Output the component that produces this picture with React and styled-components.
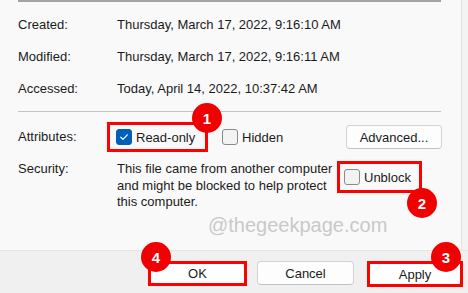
import React from 'react';
import styled, { createGlobalStyle } from 'styled-components';

const GlobalStyle = createGlobalStyle`
  html, body {
    margin: 0;
    padding: 0;
    background: #f0f0f0;
  }
  * {
    box-sizing: border-box;
  }
`;

// Window frame
const Window = styled.div`
  width: 468px;
  height: 293px;
  display: flex;
  flex-direction: column;
  overflow: hidden;
  font-family: "Liberation Sans", Arial, sans-serif;
  font-size: 13px;
  color: #1b1b1b;
`;

const Body = styled.div`
  height: 251px;
  display: flex;
  border-bottom: 1px solid #e5e5e5;
`;

const Main = styled.div`
  width: 462px;
  background: #f9f9f9;
  border-right: 1px solid #e3e3e3;
  padding: 0 19px 0 18px;
  display: flex;
  flex-direction: column;
`;

const Gutter = styled.div`
  flex: 1;
  background: #f3f3f3;
`;

const Rule = styled.div`
  width: 423px;
  height: ${(p) => (p.$strong ? '2px' : '1px')};
  background: ${(p) => (p.$strong ? '#a3a3a3' : '#c4c4c4')};
  margin-top: ${(p) => p.$mt || 0}px;
`;

// Date rows
const DateGrid = styled.div`
  display: grid;
  grid-template-columns: 99px 1fr;
  grid-auto-rows: 32px;
  align-items: center;
  padding-top: 6px;
  white-space: nowrap;
`;

const Row = styled.div`
  display: flex;
  align-items: ${(p) => (p.$top ? 'flex-start' : 'center')};
  margin-top: ${(p) => p.$mt}px;
`;

const Label = styled.div`
  width: ${(p) => p.$w}px;
  flex: none;
  line-height: 16.5px;
`;

const Desc = styled.div`
  width: 220px;
  flex: none;
  line-height: 16.5px;
`;

// Annotation box drawn around a control
const Highlight = styled.div`
  position: relative;
  width: ${(p) => p.$w}px;
  height: ${(p) => p.$h}px;
  flex: none;
  border: 3px solid #ff0000;
  background: ${(p) => (p.$fill ? '#ffffff' : 'transparent')};
  display: flex;
  align-items: center;
  justify-content: ${(p) => (p.$center ? 'center' : 'flex-start')};
  padding-left: ${(p) => p.$pl || 0}px;
`;

const Badge = styled.div`
  position: absolute;
  left: ${(p) => p.$left}px;
  top: ${(p) => p.$top}px;
  width: 30px;
  height: 30px;
  border-radius: 50%;
  background: #f00000;
  color: #ffffff;
  font-weight: bold;
  font-size: 15px;
  display: flex;
  align-items: center;
  justify-content: center;
  z-index: 2;
`;

const Check = styled.label`
  display: flex;
  align-items: center;
  gap: 4px;
  margin-left: ${(p) => p.$ml || 0}px;
  white-space: nowrap;
`;

const Box = styled.span`
  width: 16px;
  height: 16px;
  border-radius: 3px;
  display: flex;
  align-items: center;
  justify-content: center;
  background: ${(p) => (p.$checked ? '#005fb8' : '#f3f3f3')};
  border: 1px solid ${(p) => (p.$checked ? '#005fb8' : '#8a8a8a')};
`;

const Button = styled.div`
  width: ${(p) => p.$w}px;
  height: 24px;
  flex: none;
  margin-left: ${(p) => (p.$auto ? 'auto' : `${p.$ml || 0}px`)};
  border: 1px solid #d3d3d3;
  border-bottom-color: #c2c2c2;
  border-radius: 4px;
  background: #fdfdfd;
  display: flex;
  align-items: center;
  justify-content: center;
`;

const Watermark = styled.div`
  margin: 2px 0 0 190px;
  font-size: 20px;
  line-height: 24px;
  color: #c9c9c9;
  white-space: nowrap;
`;

const Footer = styled.div`
  flex: 1;
  background: #f0f0f0;
  display: flex;
  justify-content: flex-end;
  align-items: flex-start;
  padding: 10px 5px 0 0;
`;

const Spacer = styled.div`
  width: ${(p) => p.$w}px;
  flex: none;
`;

const Tick = () => (
  <svg width="10" height="10" viewBox="0 0 10 10">
    <path d="M1.8 5.2 L4 7.3 L8.3 2.8" fill="none" stroke="#ffffff" strokeWidth="1.2" strokeLinecap="round" strokeLinejoin="round" />
  </svg>
);

const dates = [
  ['Created:', 'Thursday, March 17, 2022, 9:16:10 AM'],
  ['Modified:', 'Thursday, March 17, 2022, 9:16:11 AM'],
  ['Accessed:', 'Today, April 14, 2022, 10:37:42 AM'],
];

export default function App() {
  return (
    <>
      <GlobalStyle />
      <Window>
        <Body>
          <Main>
            <Rule $strong />
            <DateGrid>
              {dates.map(([label, value]) => (
                <React.Fragment key={label}>
                  <div>{label}</div>
                  <div>{value}</div>
                </React.Fragment>
              ))}
            </DateGrid>
            <Rule $mt={7} />

            <Row $mt={10}>
              <Label $w={89}>Attributes:</Label>
              <Highlight $w={101} $h={30} $pl={6}>
                <Check>
                  <Box $checked><Tick /></Box>
                  Read-only
                </Check>
                <Badge $left={82} $top={-22}>1</Badge>
              </Highlight>
              <Check $ml={14}>
                <Box />
                Hidden
              </Check>
              <Button $w={96} $auto>Advanced...</Button>
            </Row>

            <Row $mt={9} $top>
              <Label $w={99}>Security:</Label>
              <Desc>
                This file came from another computer and might be blocked to help protect this computer.
              </Desc>
              <Highlight $w={85} $h={32} $pl={4}>
                <Check>
                  <Box />
                  Unblock
                </Check>
                <Badge $left={67} $top={24}>2</Badge>
              </Highlight>
            </Row>

            <Watermark>@thegeekpage.com</Watermark>
          </Main>
          <Gutter />
        </Body>

        <Footer>
          <Highlight $w={99} $h={25} $fill $center>
            OK
            <Badge $left={-10} $top={-22}>4</Badge>
          </Highlight>
          <Spacer $w={10} />
          <Button $w={97}>Cancel</Button>
          <Spacer $w={13} />
          <Highlight $w={96} $h={26} $fill $center>
            Apply
            <Badge $left={61} $top={-22}>3</Badge>
          </Highlight>
        </Footer>
      </Window>
    </>
  );
}
